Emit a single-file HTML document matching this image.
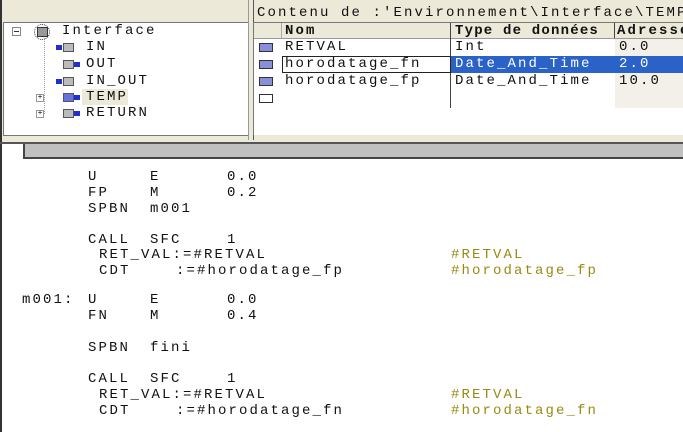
<!DOCTYPE html>
<html><head><style>
body{margin:0;width:683px;height:432px;overflow:hidden;background:#fff;position:relative;font-family:"Liberation Mono","Courier New",monospace;font-size:14px;letter-spacing:2.1px;color:#111}
.a{position:absolute;white-space:pre;line-height:16px}
.c{color:#9a8a10}
.b{font-weight:bold}
.ic{position:absolute;width:12px;height:7px;background:#8a90d8;border:1px solid #333;}
.ti{position:absolute;width:9px;height:7px;background:#bbb;border:1px solid #555}
.tb{position:absolute;width:6px;height:5px;background:#2030d0}
</style></head><body>
<div style="position:absolute;left:0;top:0;width:683px;height:142px;background:#ece9d8;border-bottom:2px solid #555"></div>
<div style="position:absolute;left:0;top:0;width:2px;height:142px;background:#333"></div>
<div style="position:absolute;left:3px;top:22px;width:244px;height:112px;background:#fff;border:1px solid #777"></div>
<div style="position:absolute;left:248px;top:0;width:4px;height:140px;background:#ece9d8;border-left:1px solid #999;border-right:1px solid #555"></div>
<div class="a" style="left:62px;top:23px">Interface</div>
<div style="position:absolute;left:12px;top:27px;width:7px;height:7px;border:1px solid #888;background:#fff"></div>
<div style="position:absolute;left:14px;top:31px;width:5px;height:1px;background:#333"></div>
<div style="position:absolute;left:34px;top:24px;width:14px;height:14px;border:1px dotted #333;border-radius:50%"></div>
<div style="position:absolute;left:37px;top:27px;width:9px;height:8px;background:#999;border:1px solid #333"></div>
<div style="position:absolute;left:44px;top:38px;width:0;height:76px;border-left:1px dotted #999"></div>
<div class="a" style="left:86px;top:39px">IN</div>
<div class="a" style="left:86px;top:56px">OUT</div>
<div class="a" style="left:86px;top:73px">IN_OUT</div>
<div style="position:absolute;left:82px;top:89px;width:46px;height:16px;background:#ece9d8"></div>
<div class="a" style="left:86px;top:89px">TEMP</div>
<div class="a" style="left:86px;top:105px">RETURN</div>
<div class="ti" style="left:63px;top:43px"></div><div class="tb" style="left:56px;top:45px"></div>
<div class="ti" style="left:63px;top:60px"></div><div class="tb" style="left:74px;top:62px"></div>
<div class="ti" style="left:63px;top:77px"></div><div class="tb" style="left:56px;top:79px"></div>
<div class="ti" style="left:63px;top:93px;background:#6670e0"></div><div class="tb" style="left:74px;top:95px"></div>
<div class="ti" style="left:63px;top:109px"></div><div class="tb" style="left:74px;top:111px"></div>
<div style="position:absolute;left:36px;top:94px;width:6px;height:6px;border:1px solid #999;background:#fff;font-size:8px;line-height:6px;letter-spacing:0;text-align:center">+</div>
<div style="position:absolute;left:36px;top:110px;width:6px;height:6px;border:1px solid #999;background:#fff;font-size:8px;line-height:6px;letter-spacing:0;text-align:center">+</div>
<div class="a" style="left:257px;top:5px">Contenu de :'Environnement\Interface\TEMP</div>
<div style="position:absolute;left:253px;top:22px;width:430px;height:112px;background:#fff;border-top:1px solid #777;border-left:1px solid #777"></div>
<div style="position:absolute;left:254px;top:23px;width:429px;height:15px;background:#ece9d8;border-bottom:1px solid #999"></div>
<div style="position:absolute;left:281px;top:23px;width:1px;height:15px;background:#aaa"></div>
<div style="position:absolute;left:450px;top:23px;width:1px;height:85px;background:#444"></div>
<div style="position:absolute;left:614px;top:23px;width:1px;height:15px;background:#444"></div>
<div style="position:absolute;left:615px;top:39px;width:68px;height:69px;background:#f2f0e8"></div>
<div class="a b" style="left:285px;top:23px">Nom</div>
<div class="a b" style="left:455px;top:23px;letter-spacing:1.2px">Type de données</div>
<div class="a b" style="left:617px;top:23px">Adresse</div>
<div style="position:absolute;left:451px;top:56px;width:232px;height:17px;background:#2a62c8"></div>
<div style="position:absolute;left:282px;top:56px;width:167px;height:15px;border:1px solid #222"></div>
<div class="a" style="left:285px;top:39px">RETVAL</div>
<div class="a" style="left:455px;top:39px">Int</div>
<div class="a" style="left:619px;top:39px">0.0</div>
<div class="a" style="left:285px;top:56px">horodatage_fn</div>
<div class="a" style="left:455px;top:56px;color:#fff">Date_And_Time</div>
<div class="a" style="left:619px;top:56px;color:#fff">2.0</div>
<div class="a" style="left:285px;top:73px">horodatage_fp</div>
<div class="a" style="left:455px;top:73px">Date_And_Time</div>
<div class="a" style="left:619px;top:73px">10.0</div>
<div class="ic" style="left:259px;top:43px"></div>
<div class="ic" style="left:259px;top:60px"></div>
<div class="ic" style="left:259px;top:77px"></div>
<div class="ic" style="left:259px;top:94px;background:#fff"></div>
<div style="position:absolute;left:0;top:144px;width:2px;height:288px;background:#333"></div>
<div style="position:absolute;left:23px;top:144px;width:660px;height:13px;background:#c0c0c0;border-left:2px solid #444;border-bottom:2px solid #444"></div>
<div class="a" style="left:88px;top:169px">U</div><div class="a" style="left:150px;top:169px">E</div><div class="a" style="left:227px;top:169px">0.0</div>
<div class="a" style="left:88px;top:185px">FP</div><div class="a" style="left:150px;top:185px">M</div><div class="a" style="left:227px;top:185px">0.2</div>
<div class="a" style="left:88px;top:201px">SPBN</div><div class="a" style="left:150px;top:201px">m001</div>
<div class="a" style="left:88px;top:232px">CALL</div><div class="a" style="left:150px;top:232px">SFC</div><div class="a" style="left:227px;top:232px">1</div>
<div class="a" style="left:99px;top:247px">RET_VAL:=#RETVAL</div><div class="a c" style="left:451px;top:247px">#RETVAL</div>
<div class="a" style="left:99px;top:263px">CDT</div><div class="a" style="left:176px;top:263px">:=#horodatage_fp</div><div class="a c" style="left:451px;top:263px">#horodatage_fp</div>
<div class="a" style="left:22px;top:292px">m001:</div>
<div class="a" style="left:88px;top:292px">U</div><div class="a" style="left:150px;top:292px">E</div><div class="a" style="left:227px;top:292px">0.0</div>
<div class="a" style="left:88px;top:308px">FN</div><div class="a" style="left:150px;top:308px">M</div><div class="a" style="left:227px;top:308px">0.4</div>
<div class="a" style="left:88px;top:340px">SPBN</div><div class="a" style="left:150px;top:340px">fini</div>
<div class="a" style="left:88px;top:371px">CALL</div><div class="a" style="left:150px;top:371px">SFC</div><div class="a" style="left:227px;top:371px">1</div>
<div class="a" style="left:99px;top:387px">RET_VAL:=#RETVAL</div><div class="a c" style="left:451px;top:387px">#RETVAL</div>
<div class="a" style="left:99px;top:403px">CDT</div><div class="a" style="left:176px;top:403px">:=#horodatage_fn</div><div class="a c" style="left:451px;top:403px">#horodatage_fn</div>
</body></html>
